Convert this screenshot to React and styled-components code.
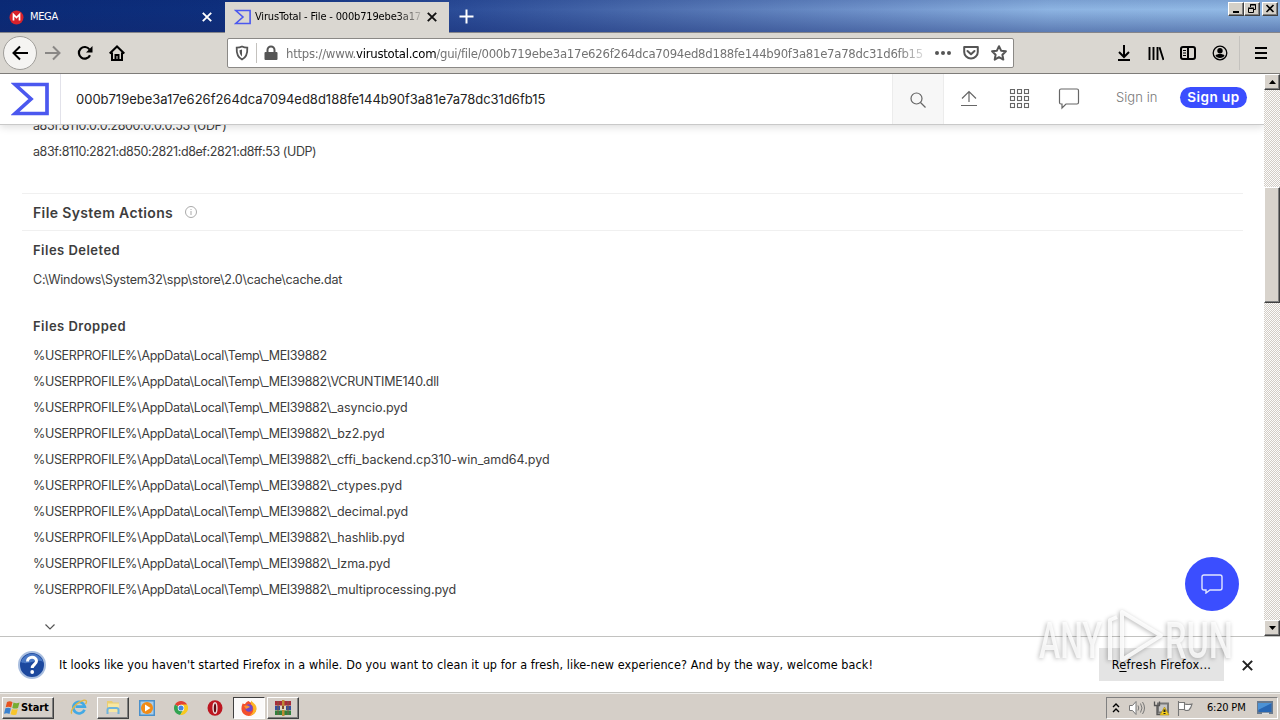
import React from "react";
import styled, { createGlobalStyle, css } from "styled-components";

const GlobalStyle = createGlobalStyle`
  *, *::before, *::after { box-sizing: border-box; }
  body { margin: 0; background: #fff; }
  svg { display: block; flex: none; }
`;

const uiFont = `"DejaVu Sans Condensed", "DejaVu Sans", sans-serif`;
const pageFont = `Inter, "Liberation Sans", sans-serif`;

const raised = css`
  border: 1px solid;
  border-color: #fff #404040 #404040 #fff;
  box-shadow: inset -1px -1px 0 #808080;
`;

const Desktop = styled.div`
  position: relative;
  display: flex;
  flex-direction: column;
  width: 1280px;
  height: 720px;
  overflow: hidden;
  font-family: ${uiFont};
  color: #000;
`;

/* ---------- title bar ---------- */
const TitleBar = styled.header`
  display: flex;
  height: 33px;
  flex: none;
  border-bottom: 1px solid #85858a;
  background:
    linear-gradient(180deg, rgba(10, 36, 110, 0.15), rgba(10, 36, 110, 0) 30%, rgba(20, 40, 110, 0.4)),
    linear-gradient(90deg, #0a2a76 0%, #0e2f7d 17%, #2c4d98 36%, #4f70b0 52%, #7093cb 68%, #8db4e2 82%, #93bbe6 100%);
`;

const Tab = styled.div`
  display: flex;
  align-items: center;
  width: 224px;
  height: ${(p) => (p.$active ? 31 : 32)}px;
  margin-top: ${(p) => (p.$active ? 2 : 0)}px;
  padding: ${(p) => (p.$active ? "0 12px 2px 9px" : "2px 12px 0 9px")};
  margin-left: ${(p) => (p.$active ? 1 : 0)}px;
  color: ${(p) => (p.$active ? "#000" : "#fff")};
  background: ${(p) => (p.$active ? "#dad7d1" : "transparent")};
`;

const TabTitle = styled.span`
  flex: 1;
  margin-left: ${(p) => (p.$fade ? 4 : 6)}px;
  font-size: 11px;
  line-height: 16px;
  white-space: nowrap;
  overflow: hidden;
  letter-spacing: ${(p) => p.$spacing}px;
  ${(p) => p.$fade && css`mask-image: linear-gradient(90deg, #000 142px, transparent 170px);`}
`;

const NewTab = styled.div`
  display: flex;
  align-items: center;
  width: 34px;
  padding-left: 10px;
`;

const WindowButtons = styled.div`
  display: flex;
  margin: 2px 2px 0 auto;
  height: 14px;
`;

const WindowButton = styled.div`
  ${raised}
  width: 16px;
  height: 14px;
  background: #d4d0c8;
  margin-left: ${(p) => (p.$gap ? 2 : 0)}px;
`;

/* ---------- toolbar ---------- */
const Toolbar = styled.nav`
  display: flex;
  align-items: center;
  height: 41px;
  flex: none;
  padding: 0 13px 0 3px;
  background: #dad7d1;
  border-bottom: 1px solid #7e7c79;
`;

const BackButton = styled.div`
  display: grid;
  place-items: center;
  width: 34px;
  height: 34px;
  border: 1px solid #a09e9a;
  border-radius: 50%;
  background: #f5f4f2;
`;

const NavIcons = styled.div`
  display: flex;
  gap: 16px;
  margin-left: 8px;
`;

const AddressBar = styled.div`
  display: flex;
  align-items: center;
  width: 787px;
  height: 30px;
  margin-left: 102px;
  padding: 0 6px;
  background: #fff;
  border: 1px solid #8b8986;
  border-radius: 2px;
`;

const AddressDivider = styled.i`
  width: 1px;
  height: 20px;
  margin-left: 6px;
  background: #c4c2be;
`;

const ToolbarDivider = styled.i`
  width: 1px;
  height: 34px;
  margin: 0 -7px 0 -5px;
  background: #c4c2be;
`;

const Url = styled.span`
  width: 642px;
  margin-left: 1px;
  padding-top: 1px;
  font-size: 13px;
  line-height: 20px;
  letter-spacing: -0.26px;
  white-space: nowrap;
  overflow: hidden;
  color: #737373;
  mask-image: linear-gradient(90deg, #000 612px, transparent 646px);
  b { color: #000; font-weight: 400; }
`;

const UrlActions = styled.div`
  display: flex;
  gap: 12px;
  margin-left: 7px;
`;

const RightIcons = styled.div`
  display: flex;
  align-items: center;
  gap: 16px;
  margin-left: auto;
`;

/* ---------- page ---------- */
const Viewport = styled.div`
  display: flex;
  height: 562px;
  flex: none;
`;

const Page = styled.main`
  width: 1264px;
  overflow: hidden;
  background: #fff;
  font-family: ${pageFont};
  color: #3d3d3d;
`;

const SiteHeader = styled.div`
  position: relative;
  z-index: 1;
  display: flex;
  align-items: center;
  height: 51px;
  background: #fff;
  border-bottom: 1px solid #c9c9c9;
  box-shadow: 0 2px 8px rgba(0, 0, 0, 0.14);
`;

const LogoCell = styled.div`
  width: 61px;
  height: 50px;
  padding: 8px 0 0 11px;
  border-right: 1px solid #e2e2ea;
`;

const SearchText = styled.span`
  flex: 1;
  padding-left: 15px;
  font-size: 13px;
  letter-spacing: -0.01px;
  color: #222;
`;

const SearchCell = styled.div`
  display: grid;
  place-items: center;
  width: 52px;
  height: 50px;
  padding-top: 2px;
  background: #f7f7f7;
  border: solid #ececec;
  border-width: 0 1px;
`;

const HeaderIcons = styled.div`
  display: flex;
  align-items: center;
  gap: 26px;
  margin-left: 13px;
`;

const SignIn = styled.span`
  margin-left: 35px;
  width: 64px;
  font-size: 13px;
  font-weight: 300;
  letter-spacing: 0.05px;
  margin-top: -4px;
  color: #777;
`;

const SignUp = styled.span`
  width: 67px;
  height: 21px;
  margin: -4px 17px 0 0;
  border-radius: 11px;
  background: #3b4eff;
  color: #fff;
  font-size: 13.5px;
  font-weight: 600;
  letter-spacing: 0.5px;
  line-height: 21px;
  text-align: center;
`;

const Report = styled.div`
  margin: -12px 21px 0 22px;
`;

const Entries = styled.div`
  padding-left: 11px;
`;

const Entry = styled.div`
  height: 26px;
  line-height: 26px;
  font-size: 12.5px;
  letter-spacing: ${(p) => p.$spacing || 0}px;
  white-space: nowrap;
`;

const BasePath = styled.span`
  letter-spacing: -0.33px;
`;

const SectionTitle = styled.h2`
  display: flex;
  align-items: center;
  gap: 12px;
  height: 38px;
  margin: 28px 0 0;
  padding-left: 11px;
  border: solid #f0f0f0;
  border-width: 1px 0;
  font-size: 14px;
  font-weight: 600;
  letter-spacing: 0.37px;
`;

const GroupTitle = styled.h3`
  margin: ${(p) => p.$top}px 0 4px;
  height: 26px;
  line-height: 26px;
  padding-left: 11px;
  font-size: 13px;
  font-weight: 600;
  letter-spacing: 0.48px;
`;

const More = styled.div`
  padding: 20px 0 0 22px;
`;

const ScrollBar = styled.aside`
  display: flex;
  flex-direction: column;
  width: 16px;
  background: repeating-conic-gradient(#d2cdc6 0 25%, #fdfcfb 0 50%) 0 0 / 2px 2px;
`;

const ScrollButton = styled.div`
  ${raised}
  display: grid;
  place-items: center;
  height: 16px;
  background: #d8d3cc;
`;

const ScrollThumb = styled.div`
  ${raised}
  height: 116px;
  margin: 97px 0 auto;
  background: #d8d3cc;
`;

/* ---------- notification ---------- */
const Notification = styled.section`
  display: flex;
  align-items: center;
  height: 57px;
  flex: none;
  padding-left: 18px;
  background: #fff;
  border-top: 1px solid #c2c2c0;
  border-bottom: 1px solid #c6c6c2;
`;

const Message = styled.span`
  width: 1040px;
  margin-left: 13px;
  font-size: 12.5px;
  letter-spacing: 0.09px;
  white-space: nowrap;
`;

const RefreshButton = styled.div`
  width: 125px;
  height: 33px;
  background: #e4e4e4;
  font-size: 12.5px;
  letter-spacing: 0.32px;
  line-height: 33px;
  text-align: center;
  u { text-underline-offset: 2px; }
`;

const Dismiss = styled.div`
  margin: 1px 0 0 18px;
`;

/* ---------- taskbar ---------- */
const Taskbar = styled.footer`
  display: flex;
  align-items: center;
  height: 27px;
  flex: none;
  padding: 2px 2px 1px 2px;
  background: #d5cfc8;
  border-top: 1px solid #f0efec;
`;

const StartButton = styled.div`
  ${raised}
  display: flex;
  align-items: center;
  width: 52px;
  height: 22px;
  padding-left: 1px;
  font-size: 11px;
  font-weight: 700;
  letter-spacing: -0.1px;
`;

const TaskItem = styled.div`
  display: grid;
  place-items: center;
  width: 32px;
  height: 22px;
  margin-left: 2px;
  ${(p) => p.$state === "open" && raised}
  ${(p) => p.$state === "active" && css`
    border: 1px solid;
    border-color: #404040 #fff #fff #404040;
    background: #fbfafa;
  `}
`;

const TaskItems = styled.div`
  display: flex;
  margin-left: 7px;
`;

const Tray = styled.div`
  display: flex;
  align-items: center;
  width: 172px;
  height: 22px;
  margin-left: auto;
  padding-left: 5px;
  border: 1px solid;
  border-color: #808080 #fff #fff #808080;
`;

const Clock = styled.span`
  width: 50px;
  margin-left: 12px;
  font-size: 11px;
  letter-spacing: -0.2px;
  white-space: nowrap;
`;

/* ---------- overlays ---------- */
const ChatBubble = styled.div`
  position: absolute;
  left: 1185px;
  top: 557px;
  display: grid;
  place-items: center;
  width: 54px;
  height: 54px;
  border-radius: 50%;
  background: #3b4eff;
`;

const Watermark = styled.svg`
  position: absolute;
  left: 1030px;
  top: 600px;
  filter: drop-shadow(-1px 1px 2px rgba(0, 0, 0, 0.34));
`;

const Icon = ({ w = 16, h = w, box, stroke = "none", sw = 2, fill = "none", children }) => (
  <svg width={w} height={h} viewBox={box || `0 0 ${w} ${h}`} stroke={stroke} strokeWidth={sw} fill={fill}>
    {children}
  </svg>
);

const Close = ({ color, w = 10, sw = 1.9 }) => (
  <Icon w={w} box="0 0 10 10" stroke={color} sw={sw}><path d="M.8.8l8.4 8.4M9.2.8L.8 9.2" /></Icon>
);

const Sigma = ({ w, h = w, sw }) => (
  <Icon w={w} h={h} box="0 0 38 33" stroke="#4b58ef" sw={sw}>
    <path d="M4 2h32v29H4l16-14.500z" />
  </Icon>
);

const base = "%USERPROFILE%\\AppData\\Local\\Temp\\_MEI39882";
const dropped = [
  "", "\\VCRUNTIME140.dll", "\\_asyncio.pyd", "\\_bz2.pyd", "\\_cffi_backend.cp310-win_amd64.pyd",
  "\\_ctypes.pyd", "\\_decimal.pyd", "\\_hashlib.pyd", "\\_lzma.pyd", "\\_multiprocessing.pyd",
];
const hash = "000b719ebe3a17e626f264dca7094ed8d188fe144b90f3a81e7a78dc31d6fb15";

const BrowserTabs = () => (
  <TitleBar>
    <Tab>
      <Icon w={15}>
        <circle cx="7.500" cy="7.500" r="7" fill="#d9222b" />
        <path d="M4.500 10.500v-6l3 3 3-3v6" stroke="#fff" strokeWidth="1.700" />
      </Icon>
      <TabTitle $spacing={-0.35}>MEGA</TabTitle>
      <Close color="#fff" />
    </Tab>
    <Tab $active>
      <Sigma w={17} h={16} sw={3.6} />
      <TabTitle $fade $spacing={-0.16}>VirusTotal - File - 000b719ebe3a17</TabTitle>
      <Close color="#111" />
    </Tab>
    <NewTab><Icon w={15} stroke="#fff"><path d="M7.500 .5v14M.5 7.500h14" /></Icon></NewTab>
    <WindowButtons>
      <WindowButton><Icon w={14} h={12} fill="#000"><path d="M4 8h6v2H4z" /></Icon></WindowButton>
      <WindowButton>
        <Icon w={14} h={12} stroke="#000" sw={1}><path d="M5.500 4V1.500h5v5H9M5 2h6M3.500 5.500h5v4h-5zM3 5h6" /></Icon>
      </WindowButton>
      <WindowButton $gap><Icon w={14} h={12} stroke="#000" sw={1.6}><path d="M3.500 2l7 7M10.500 2l-7 7" /></Icon></WindowButton>
    </WindowButtons>
  </TitleBar>
);

const BrowserToolbar = () => (
  <Toolbar>
    <BackButton><Icon stroke="#000"><path d="M16 8H1.500M8 1.500L1.500 8 8 14.500" /></Icon></BackButton>
    <NavIcons>
      <Icon stroke="#898785"><path d="M0 8h14.500M8 1.500L14.500 8 8 14.500" /></Icon>
      <Icon stroke="#000" sw={2.2}>
        <path d="M13 10.200A5.800 5.800 0 1 1 12.500 4.500" />
        <path d="M15.500 1v6.500H9z" fill="#000" stroke="none" />
      </Icon>
      <Icon stroke="#000"><path d="M.7 8.500L8 1.500l7.300 7M3 7.500V15h10V7.500M6.500 15v-5h3v5" /></Icon>
    </NavIcons>
    <AddressBar>
      <Icon stroke="#555" sw={1.8}>
        <path d="M8 1.500c2 1 3.600 1.200 5.300 1.200C13.600 8.500 12 12.500 8 14.500 4 12.500 2.400 8.500 2.700 2.700c1.700 0 3.300-.2 5.300-1.200z" />
        <path d="M8 4.500v7C6.300 10 5.500 8 5.500 5.200z" fill="#555" stroke="none" />
      </Icon>
      <AddressDivider />
      <Icon w={28} h={16} fill="#555">
        <path d="M9.500 7V5a4.500 4.500 0 0 1 9 0v2h1a1 1 0 0 1 1 1v6a1 1 0 0 1-1 1h-11a1 1 0 0 1-1-1V8a1 1 0 0 1 1-1zm2 0h5V5a2.500 2.500 0 0 0-5 0z" />
      </Icon>
      <Url>https://www.<b>virustotal.com</b>/gui/file/{hash}</Url>
      <UrlActions>
        <Icon fill="#555"><circle cx="2" cy="8" r="2" /><circle cx="8" cy="8" r="2" /><circle cx="14" cy="8" r="2" /></Icon>
        <Icon stroke="#555"><path d="M1.200 2h13.600v5a6.800 6.500 0 0 1-13.600 0zM4.500 6L8 9.300 11.500 6" strokeLinejoin="round" strokeLinecap="round" /></Icon>
        <Icon stroke="#555"><path d="M8 1.200l2.100 4.500 4.800.6-3.500 3.400.9 4.900L8 12.200l-4.300 2.400.9-4.900L1.100 6.300l4.800-.6z" strokeLinejoin="round" /></Icon>
      </UrlActions>
    </AddressBar>
    <RightIcons>
      <Icon stroke="#000"><path d="M8 0v12M3 7l5 5 5-5M2 15h12" /></Icon>
      <Icon stroke="#000"><path d="M1.500 2v13M5.500 2v13M9.500 2v13M11.500 2.200L15.500 15" strokeWidth="1.900" /></Icon>
      <Icon stroke="#000"><rect x="1" y="2" width="14" height="12" rx="2" /><path d="M8 2v12" /><path d="M3 5.500h3M3 8h3M3 10.500h3" strokeWidth="1" /></Icon>
      <Icon>
        <circle cx="8" cy="8" r="6.800" stroke="#000" strokeWidth="1.300" />
        <circle cx="8" cy="5.800" r="2.700" fill="#000" /><path d="M3.500 10.500c1-2 8-2 9 0C12 12 10 13 8 13s-4-1-4.500-2.500z" fill="#000" />
      </Icon>
      <ToolbarDivider />
      <Icon w={18} h={16} stroke="#000"><path d="M6 3h12M6 8h12M6 13h12" /></Icon>
    </RightIcons>
  </Toolbar>
);

const VirusTotalHeader = () => (
  <SiteHeader>
    <LogoCell><Sigma w={38} h={34} sw={3.7} /></LogoCell>
    <SearchText>{hash}</SearchText>
    <SearchCell><Icon stroke="#666" sw={1.2}><circle cx="6.500" cy="6.500" r="5.500" /><path d="M10.500 10.500l5 5" /></Icon></SearchCell>
    <HeaderIcons>
      <Icon w={24} h={20} stroke="#666" sw={1.2}><path d="M12 13V3M5 9.500L12 2.500l7 7M4 16.500h16" /></Icon>
      <Icon w={24} h={20} stroke="#666" sw={1.1}>
        {[1, 8, 15].map((y) => [3, 10, 17].map((x) => <rect key={`${x}-${y}`} x={x + 0.5} y={y - 0.5} width="4" height="4" />))}
      </Icon>
      <Icon w={24} h={22} stroke="#666" sw={1.2}><path d="M4 1h16q1.500 0 1.500 1.500v12q0 1.500-1.500 1.500H9l-4 4v-4H4q-1.500 0-1.500-1.500v-12Q2.500 1 4 1z" /></Icon>
    </HeaderIcons>
    <SignIn>Sign in</SignIn>
    <SignUp>Sign up</SignUp>
  </SiteHeader>
);

const FileReport = () => (
  <Report>
    <Entries>
      <Entry $spacing={-0.4}>a83f:8110:0:0:2800:0:0:0:53 (UDP)</Entry>
      <Entry $spacing={-0.4}>a83f:8110:2821:d850:2821:d8ef:2821:d8ff:53 (UDP)</Entry>
    </Entries>
    <SectionTitle>
      File System Actions
      <Icon w={12} stroke="#aaa" sw={1}><circle cx="6" cy="6" r="5.500" /><path d="M6 5v4M6 3v1" /></Icon>
    </SectionTitle>
    <GroupTitle $top={6}>Files Deleted</GroupTitle>
    <Entries><Entry $spacing={-0.2}>C:\Windows\System32\spp\store\2.0\cache\cache.dat</Entry></Entries>
    <GroupTitle $top={20}>Files Dropped</GroupTitle>
    <Entries>
      {dropped.map((name) => (
        <Entry key={name} $spacing={name.endsWith(".dll") ? -0.25 : -0.03}><BasePath>{base}</BasePath>{name}</Entry>
      ))}
    </Entries>
    <More><Icon w={12} h={8} stroke="#555" sw={1.2}><path d="M1.500 1.500L6 6l4.500-4.500" /></Icon></More>
  </Report>
);

const FirefoxNotice = () => (
  <Notification>
    <Icon w={28}>
      <circle cx="14" cy="14" r="13" fill="#1c489e" stroke="#a9bedf" />
      <path d="M3 11a11.500 11.500 0 0 1 22 0C19 7 9 15 3 11z" fill="#4a78c5" />
      <path d="M9.500 10.500C9.500 5 18.500 5 18.500 10c0 3.500-4.300 3.500-4.300 7" stroke="#fff" strokeWidth="3" />
      <circle cx="14.200" cy="21" r="1.900" fill="#fff" />
    </Icon>
    <Message>It looks like you haven't started Firefox in a while. Do you want to clean it up for a fresh, like-new experience? And by the way, welcome back!</Message>
    <RefreshButton>R<u>e</u>fresh Firefox...</RefreshButton>
    <Dismiss><Close color="#222" w={11} /></Dismiss>
  </Notification>
);

const WindowsTaskbar = () => (
  <Taskbar>
    <StartButton>
      <Icon w={17} h={16}>
        <path d="M3 2q3-1.500 5.500.2L7.200 7.500Q4.500 6 1.700 7.200z" fill="#e65320" />
        <path d="M9.500 2.600q3 1.300 6-.1L14 8q-3 1.200-5.700-.1z" fill="#76ad32" />
        <path d="M1.400 8.300q3-1.200 5.500.2L5.500 14Q3 12.500 0 13.700z" fill="#3a82cf" />
        <path d="M8 9q3 1.200 5.800 0l-1.400 5.500q-3 1.200-5.800-.2z" fill="#f8c52b" />
      </Icon>
      Start
    </StartButton>
    <TaskItems>
      <TaskItem>
        <Icon w={18}>
          <path d="M14.500 10.800A5.800 5.800 0 1 1 14.800 7.600H5.500" stroke="#43a9e4" strokeWidth="2.700" />
          <path d="M2 14.500C-1 13 6 3 14 1.200c3-.5 3 2 1.500 4" stroke="#e2b745" strokeWidth="1.400" />
        </Icon>
      </TaskItem>
      <TaskItem $state="open">
        <Icon w={18}>
          <path d="M3 2h5l1 1.500h6V12H3z" fill="#e9cd72" /><path d="M4 4.500h11V13H4z" fill="#f7e7a2" />
          <path d="M3.500 15v-4q0-2 2-2h7q2 0 2 2v4" stroke="#6eb4dc" strokeWidth="2" />
        </Icon>
      </TaskItem>
      <TaskItem>
        <Icon><rect x=".5" y=".5" width="15" height="15" fill="#a9cdea" stroke="#4a90cb" /><circle cx="8" cy="8" r="6" fill="#f28b16" /><path d="M6 4.500v7L11.500 8z" fill="#fff" /></Icon>
      </TaskItem>
      <TaskItem>
        <Icon w={14} box="0 0 16 16">
          <path d="M8 8L1.100 4A8 8 0 0 1 14.900 4z" fill="#e34133" /><path d="M8 8h-1L1.100 4a8 8 0 0 0 6 12L11 9z" fill="#31a350" />
          <path d="M8 8l3 2-3.900 6A8 8 0 0 0 14.900 4H8z" fill="#f8c91e" /><circle cx="8" cy="8" r="3.700" fill="#fff" /><circle cx="8" cy="8" r="2.900" fill="#4285df" />
        </Icon>
      </TaskItem>
      <TaskItem>
        <Icon><ellipse cx="8" cy="8" rx="7.500" ry="7.800" fill="#bd1721" /><ellipse cx="8" cy="8" rx="1.900" ry="5.300" fill="#5e0c12" stroke="#eedede" strokeWidth="1.400" /></Icon>
      </TaskItem>
      <TaskItem $state="active">
        <Icon>
          <path d="M2 3c0 1 1 1 2 1 1-2 3-3 4-3 0 2 5 1 7 7 1 4-3 8-7 8S0 13 .5 8C.6 6 1 5 2 3z" fill="#f3502d" />
          <path d="M10 .5c1 1.500 6 4 5.500 8.500C15 13 12 15.500 8 15.500c5-2 5.500-8 2-11z" fill="#fdb627" />
          <circle cx="8" cy="8" r="3.700" fill="#7049ca" /><path d="M3 6c3-1 5 0 6 1l-4 2z" fill="#ff922e" />
        </Icon>
      </TaskItem>
      <TaskItem $state="open">
        <Icon>
          <path d="M0 1h16v4.500H0z" fill="#a92b39" /><path d="M0 6h16v4H0z" fill="#334f9e" /><path d="M0 10.500h16V15H0z" fill="#2f813d" />
          <path d="M3 1v14M13 1v14" stroke="#7d5a42" strokeWidth="1" /><path d="M7 0h2.500v16H7z" fill="#bd8b35" /><path d="M5 6h6v4H5z" fill="#e2d9c0" /><path d="M7 6h2v3H7z" fill="#7b4c2a" />
        </Icon>
      </TaskItem>
    </TaskItems>
    <Tray>
      <Icon w={8} h={12} stroke="#000" sw={1.4}><path d="M1 5l3-3 3 3M1 10l3-3 3 3" /></Icon>
      <Icon w={26} h={16} stroke="#777" sw={1}>
        <path d="M9.500 5.500h3l3.500-4v13l-3.500-4h-3z" fill="#fff" /><path d="M18 5.500q1.500 2.500 0 5M20.500 3.500q3 4.500 0 9M22.500 2q4 6 0 12" />
      </Icon>
      <Icon w={25} h={16}>
        <path d="M12 3.500h10v9H12z" fill="#c6c6c6" stroke="#777" /><path d="M8.500 1.500v4h5v-4M11 5.500v9h3" stroke="#555" strokeWidth="1.300" />
        <path d="M18.500 7l4.500 8H14z" fill="#f5ce1c" stroke="#a9870b" strokeWidth=".6" /><path d="M18.500 9.500v2.500M18.500 13v1" stroke="#222" />
      </Icon>
      <Icon w={24} h={16} stroke="#777" sw={1.1}><path d="M7.500 1v15M7.500 2.500h6v7h-6M13.500 4q4 1 7.500 0-1 4-3 6-2 1-4.500 0" fill="#fff" /></Icon>
      <Clock>6:20 PM</Clock>
      <Icon w={16} h={14}><rect x=".5" y="1" width="15" height="11" fill="#2867b4" stroke="#68798d" /><path d="M1 2h14L1 9z" fill="#4c92d5" /><path d="M5 12.500h7" stroke="#ddd" strokeWidth="1.500" /></Icon>
    </Tray>
  </Taskbar>
);

export default function App() {
  return (
    <Desktop>
      <GlobalStyle />
      <BrowserTabs />
      <BrowserToolbar />
      <Viewport>
        <Page>
          <VirusTotalHeader />
          <FileReport />
        </Page>
        <ScrollBar>
          <ScrollButton><Icon w={7} h={4} fill="#000"><path d="M0 4h7L3.500 0z" /></Icon></ScrollButton>
          <ScrollThumb />
          <ScrollButton><Icon w={7} h={4} fill="#000"><path d="M0 0h7L3.500 4z" /></Icon></ScrollButton>
        </ScrollBar>
      </Viewport>
      <FirefoxNotice />
      <WindowsTaskbar />
      <ChatBubble>
        <Icon w={22} h={20} stroke="#e2e6ff" sw={1.4}><path d="M3 1h16q2 0 2 2v11q0 2-2 2H9l-4 3v-3H3q-2 0-2-2V3q0-2 2-2z" /></Icon>
      </ChatBubble>
      <Watermark width="220" height="76" viewBox="0 0 220 76" fill="#fff" fillOpacity="0.8">
        <text x="9" y="58" fontFamily="Roboto, sans-serif" fontSize="50" fontWeight="500" textLength="63" lengthAdjust="spacingAndGlyphs">ANY</text>
        <text x="135" y="58" fontFamily="Roboto, sans-serif" fontSize="50" fontWeight="500" textLength="68" lengthAdjust="spacingAndGlyphs">RUN</text>
        <path d="M92 12l39 23.500L92 60z M80 60V20l7-3" fill="none" stroke="#fff" strokeOpacity="0.85" strokeWidth="4" strokeLinejoin="round" />
      </Watermark>
    </Desktop>
  );
}
